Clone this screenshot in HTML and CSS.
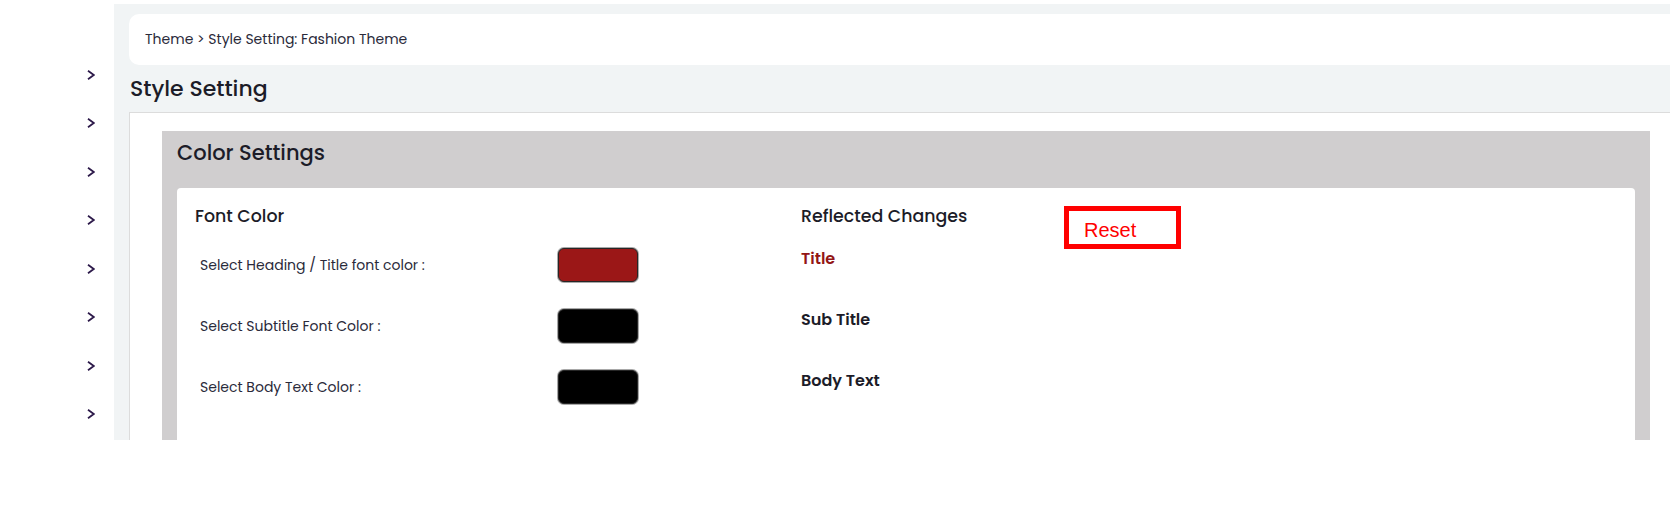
FILE: index.html
```html
<!DOCTYPE html>
<html lang="en">

<head>
    <meta charset="UTF-8">
    <meta name="viewport" content="width=device-width, initial-scale=1.0">
    <title>Style Setting</title>
    <link rel="stylesheet" href="styles.css">
</head>

<body>
    <div class="page">
        <div class="sidebar">
            <div class="side-item"><svg viewBox="0 0 8 10"><polyline points="1,0.8 6.8,5 1,9.2" /></svg></div>
            <div class="side-item"><svg viewBox="0 0 8 10"><polyline points="1,0.8 6.8,5 1,9.2" /></svg></div>
            <div class="side-item"><svg viewBox="0 0 8 10"><polyline points="1,0.8 6.8,5 1,9.2" /></svg></div>
            <div class="side-item"><svg viewBox="0 0 8 10"><polyline points="1,0.8 6.8,5 1,9.2" /></svg></div>
            <div class="side-item"><svg viewBox="0 0 8 10"><polyline points="1,0.8 6.8,5 1,9.2" /></svg></div>
            <div class="side-item"><svg viewBox="0 0 8 10"><polyline points="1,0.8 6.8,5 1,9.2" /></svg></div>
            <div class="side-item"><svg viewBox="0 0 8 10"><polyline points="1,0.8 6.8,5 1,9.2" /></svg></div>
            <div class="side-item"><svg viewBox="0 0 8 10"><polyline points="1,0.8 6.8,5 1,9.2" /></svg></div>
        </div>

        <div class="main">
            <div class="breadcrumb">Theme &gt; Style Setting: Fashion Theme</div>
            <h2 class="page-title">Style Setting</h2>

            <div class="content-box">
                <div class="settings-card">
                    <div class="settings-head">Color Settings</div>
                    <div class="settings-body">
                        <div class="col-left">
                            <h3 class="section-title">Font Color</h3>
                            <div class="color-row">
                                <label>Select Heading / Title font color :</label>
                                <span class="swatch swatch-red"></span>
                            </div>
                            <div class="color-row">
                                <label>Select Subtitle Font Color :</label>
                                <span class="swatch"></span>
                            </div>
                            <div class="color-row">
                                <label>Select Body Text Color :</label>
                                <span class="swatch"></span>
                            </div>
                        </div>
                        <div class="col-right">
                            <div class="preview-head">
                                <h3 class="section-title preview-title">Reflected Changes</h3>
                                <button class="reset-btn">Reset</button>
                            </div>
                            <div class="preview-list">
                                <div class="preview-row title-text">Title</div>
                                <div class="preview-row">Sub Title</div>
                                <div class="preview-row">Body Text</div>
                            </div>
                        </div>
                    </div>
                </div>
            </div>
        </div>
    </div>
</body>

</html>
```

FILE: styles.css
```css
body {
    margin: 0;
    background: white;
    font-family: "Poppins", "Inter", sans-serif;
    color: #1c1c28;
    overflow: hidden;
}

.page {
    display: flex;
    height: 440px;
}

/* left nav, only the arrows are showing */
.sidebar {
    width: 114px;
    flex-shrink: 0;
    padding-top: 50.5px;
    box-sizing: border-box;
}

.side-item {
    height: 48.5px;
    display: flex;
    align-items: center;
    padding-left: 87px;
}

.side-item svg {
    width: 8px;
    height: 10px;
    fill: none;
    stroke: #2d1a4a;
    stroke-width: 1.8;
}

.main {
    flex: 1;
    margin-top: 4px;
    margin-right: -40px;
    background: #f1f4f5;
    padding: 10px 0 0 15px;
    display: flex;
    flex-direction: column;
    min-width: 0;
}

.breadcrumb {
    background: white;
    border-radius: 10px;
    height: 51px;
    display: flex;
    align-items: center;
    padding-left: 16px;
    font-size: 14px;
    color: #2a2a3a;
}

.page-title {
    margin: 0;
    padding-left: 1px;
    font-size: 22px;
    font-weight: 500;
    line-height: 47px;
}

.content-box {
    flex: 1;
    background: white;
    border: 1px solid #dcdcdc;
    border-right: none;
    border-bottom: none;
    padding: 18px 0 0 32px;
}

.settings-card {
    width: 1488px;
    height: 100%;
    background: #d0cecf;
    padding: 0 15px;
    box-sizing: border-box;
    display: flex;
    flex-direction: column;
}

.settings-head {
    font-size: 21px;
    font-weight: 500;
    line-height: 30px;
    padding: 7px 0 20px 0;
}

.settings-body {
    flex: 1;
    background: white;
    border-radius: 4px 4px 0 0;
    display: grid;
    grid-template-columns: 607px 1fr;
}

.col-left {
    padding-left: 18px;
}

.section-title {
    margin: 16px 0 6.5px;
    font-size: 17.4px;
    font-weight: 500;
    line-height: 24px;
}

.color-row {
    height: 61px;
    display: flex;
    align-items: center;
}

.color-row label {
    width: 358px;
    padding-left: 5px;
    font-size: 14px;
    color: #2a2a3a;
}

.swatch {
    width: 80px;
    height: 34px;
    box-sizing: border-box;
    border: 1px solid #262626;
    border-radius: 6px;
    box-shadow: 0 0 0 1px #a8a8a8;
    background: black;
}

.swatch-red {
    background: #9b1717;
}

.col-right {
    padding-left: 17px;
}

.preview-head {
    display: flex;
    align-items: flex-start;
}

.preview-title {
    width: 263px;
    margin-bottom: 0;
}

.reset-btn {
    margin-top: 18px;
    width: 117px;
    height: 43px;
    box-sizing: border-box;
    border: 5px solid #ff0000;
    background: white;
    color: #ff0000;
    font-family: "Liberation Sans", Arial, sans-serif;
    font-size: 20px;
    line-height: 23px;
    padding: 6px 0 0 15px;
    text-align: left;
    align-self: flex-start;
}

.preview-list {
    margin-top: -0.4px;
}

.preview-row {
    height: 61px;
    font-size: 16px;
    font-weight: 600;
    line-height: 20px;
}

.title-text {
    color: #931616;
}
```
